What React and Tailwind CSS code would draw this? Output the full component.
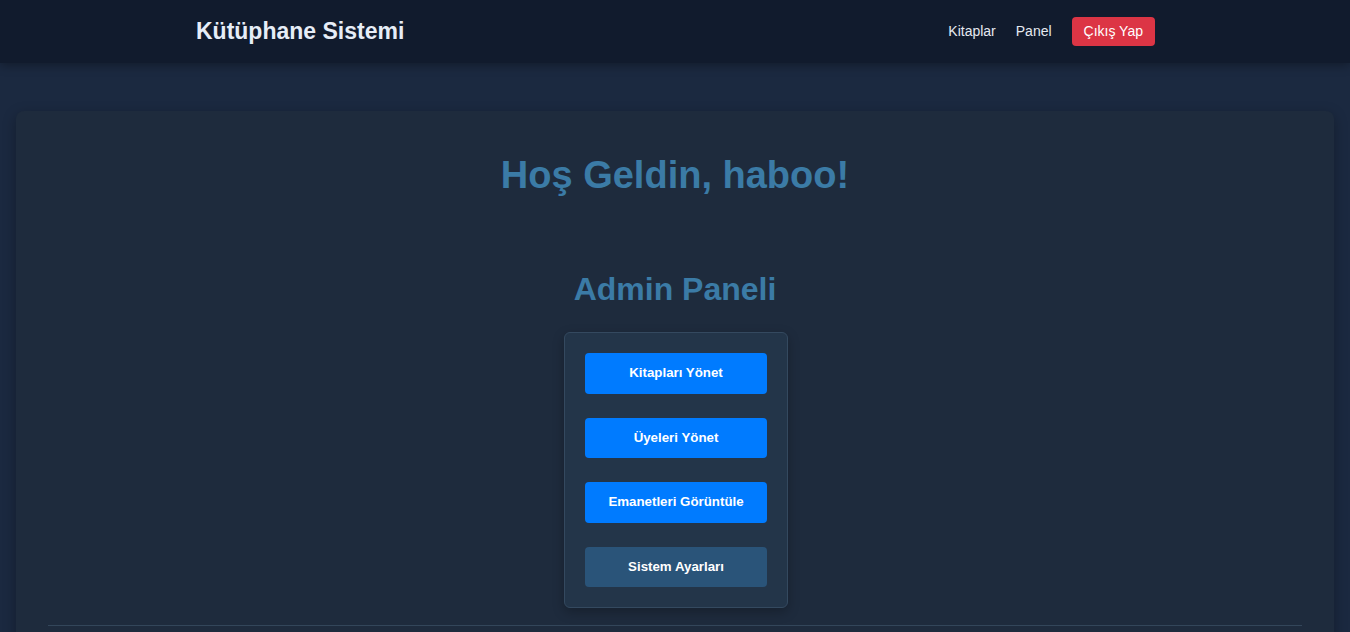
import React from 'react';

const AdminButton = ({ label, muted }) => (
    <button
        className={
            muted
                ? 'h-[40.5px] w-full rounded-[4px] bg-[#2a5479] text-[13.3px] font-bold text-white'
                : 'h-[40.5px] w-full rounded-[4px] bg-[#007bff] text-[13.3px] font-bold text-white'
        }
    >
        {label}
    </button>
);

const App = () => {
    return (
        <div className="min-h-screen bg-[#1b2940] font-['Liberation_Sans',Arial,sans-serif]">
            <nav className="h-[63px] bg-[#111b2d] shadow-[0_2px_10px_rgba(0,0,0,0.35)] relative z-10">
                <div className="max-w-[960px] mx-auto h-full flex items-center justify-between pl-px">
                    <div className="text-[23px] font-bold text-[#e6edf7]">Kütüphane Sistemi</div>
                    <div className="flex items-center gap-5 text-[14px] text-[#e5e9f0]">
                        <a href="#">Kitaplar</a>
                        <a href="#">Panel</a>
                        <button className="h-[29px] px-3 rounded-[4px] bg-[#dc3545] text-white text-[14px]">
                            Çıkış Yap
                        </button>
                    </div>
                </div>
            </nav>

            <main className="px-4 pt-12">
                <div className="bg-[#1e2b3d] rounded-lg shadow-[0_4px_14px_rgba(0,0,0,0.3)] px-8 pt-[42px] pb-24">
                    <h1 className="text-center text-[38px] leading-[44px] font-bold text-[#3b7ba6]">
                        Hoş Geldin, haboo!
                    </h1>
                    <h2 className="mt-[74px] text-center text-[32px] leading-[37px] font-bold text-[#3b7ba6]">
                        Admin Paneli
                    </h2>
                    <div className="flex justify-center pl-[2px]">
                        <div className="mt-[24px] w-[224px] rounded-md border border-[#34495f] bg-[#233549] p-5 flex flex-col gap-6 shadow-[0_4px_12px_rgba(0,0,0,0.25)]">
                            <AdminButton label="Kitapları Yönet" />
                            <AdminButton label="Üyeleri Yönet" />
                            <AdminButton label="Emanetleri Görüntüle" />
                            <AdminButton label="Sistem Ayarları" muted />
                        </div>
                    </div>
                    <hr className="mt-[17px] border-t border-[#33465a]" />
                </div>
            </main>
        </div>
    );
};

export default App;
